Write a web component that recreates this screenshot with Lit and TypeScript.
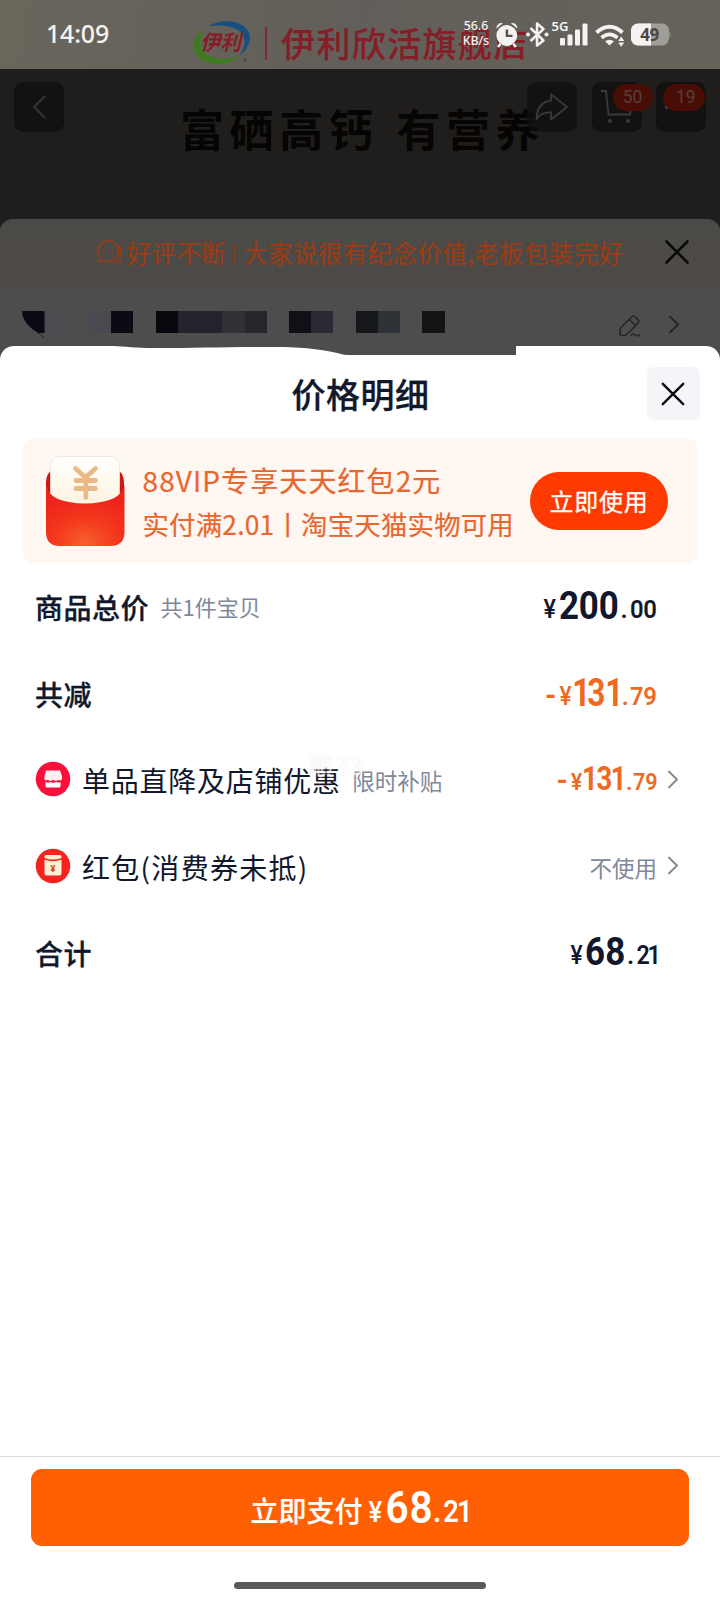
import { LitElement, html, css, svg } from "lit";
import { customElement, property } from "lit/decorators.js";

const chevron = svg`<path d="M2 1.6 L10 9.5 L2 17.4" fill="none" stroke="currentColor" stroke-width="2" stroke-linecap="round" stroke-linejoin="round"/>`;

@customElement("status-bar")
class StatusBar extends LitElement {
  static styles = css`
    :host { display: flex; height: 69px; box-sizing: border-box; padding: 0 49px 0 46px; align-items: center; justify-content: space-between; color: #f4f3f1; font-family: "Noto Sans", sans-serif; position: relative; }
    .time { font-size: 25px; font-weight: 500; line-height: 30px; letter-spacing: -0.2px; margin-top: -3px; }
    .icons { display: flex; align-items: center; height: 69px; }
    .speed { font-size: 12.3px; line-height: 15px; text-align: center; font-weight: 500; width: 28px; margin-right: 6px; margin-top: -4px; white-space: nowrap; }
    svg { display: block; flex: none; overflow: visible; }
    .num { font: 700 17px "Noto Sans", sans-serif; letter-spacing: -0.5px; }
    .g { font: 600 12px "Noto Sans", sans-serif; }
  `;
  render() {
    return html`
      <div class="time">14:09</div>
      <div class="icons">
        <div class="speed">56.6<br />KB/s</div>
        <svg width="175" height="30" viewBox="496 18.500 175 30">
          <g fill="#f4f3f1" stroke="none">
            <circle cx="506.800" cy="34" r="10.400"/>
            <path d="M496.400 27 a5 5 0 0 1 6.500-5.200z M517.400 27 a5 5 0 0 0-6.500-5.200z"/>
            <path d="M499.500 41.500 l2 1.500-2.500 3.200-2-1.500z M514.300 41.500l-2 1.500 2.500 3.200 2-1.500z"/>
          </g>
          <path d="M506.900 28 V34.400 H512.500" fill="none" stroke="#5b5148" stroke-width="2.400"/>
          <path d="M530.500 26.500 L543.500 39 L537 44 V22 L543.500 27.500 L530.500 39.500" fill="none" stroke="#f4f3f1" stroke-width="2.500" stroke-linejoin="round"/>
          <circle cx="528" cy="33" r="2" fill="#f4f3f1"/><circle cx="546.500" cy="33" r="2" fill="#f4f3f1"/>
          <text class="g" x="551.500" y="29.300" fill="#f4f3f1" textLength="17" lengthAdjust="spacingAndGlyphs">5G</text>
          <g fill="#f4f3f1">
            <rect x="560" y="36.500" width="5" height="7.500" rx="1.200"/>
            <rect x="567.500" y="33" width="5" height="11" rx="1.200"/>
            <rect x="575" y="28" width="5" height="16" rx="1.200"/>
            <rect x="582.500" y="22" width="5" height="22" rx="1.200"/>
          </g>
          <g fill="none" stroke="#f4f3f1" stroke-width="3.800">
            <path d="M596.500 31 Q609.500 19.500 622.500 31"/>
            <path d="M601.500 36.300 Q609.500 29.500 617.500 36.300"/>
          </g>
          <path d="M605 39.800 Q609.500 36.500 614 39.800 L609.500 44z" fill="#f4f3f1"/>
          <path d="M618.200 39.500 l3-4.500 3 4.500z M618.200 41 h6 l-3 4.200z" fill="#f4f3f1"/>
          <path d="M638 22 H662 a7 7 0 0 1 7 7 V37 a7 7 0 0 1-7 7 H638 a7 7 0 0 1-7-7 V29 a7 7 0 0 1 7-7z" fill="#a19e98"/>
          <path d="M638 22 H651 V44 H638 a7 7 0 0 1-7-7 V29 a7 7 0 0 1 7-7z" fill="#f4f3f1"/>
          <path d="M669.500 29.500 q2 3.500 0 7z" fill="#a19e98"/>
          <text class="num" x="649.500" y="39.200" text-anchor="middle" fill="#4c4842">49</text>
        </svg>
      </div>`;
  }
}

/** One run of a price: text, glyph origins, font size, horizontal condensing, weight. */
type Run = [string, number[], number, number, number];
interface PriceArt { width: number; base: number; runs: Run[] }

const PRICES: Record<string, PriceArt> = {
  total: { width: 120, base: 31.500, runs: [["¥", [7.5], 26, 0.9, 500], ["200", [23, 42.8, 62.8], 38, 0.92, 700], [".", [84.5], 26.5, 0.95, 600], ["00", [94, 107.3], 26.5, 0.9, 600]] },
  off: { width: 120, base: 31.500, runs: [["-", [9], 30, 0.95, 700], ["¥", [23.5], 26, 0.88, 500], ["131", [36.2, 51.3, 69.2], 38, 0.83, 700], [".", [85.8], 26.5, 0.95, 600], ["79", [94, 107.2], 26.5, 0.9, 600]] },
  item: { width: 120, base: 30, runs: [["-", [19.500], 30, 0.95, 700], ["¥", [34], 24, 0.88, 600], ["131", [45, 59.4, 73.8], 33.5, 0.82, 700], [".", [89], 24.5, 0.95, 600], ["79", [96, 108.2], 24.5, 0.88, 600]] },
  sum: { width: 120, base: 31.500, runs: [["¥", [34.5], 26, 0.88, 500], ["68", [49, 69.2], 38, 0.92, 700], [".", [91], 26.5, 0.95, 600], ["21", [100.4, 111.5], 26.5, 0.88, 600]] },
  pay: { width: 101, base: 34.5, runs: [["¥", [-0.5], 30, 0.86, 500], ["68", [16.5, 40.5], 45, 0.9, 600], [".", [64], 31, 0.95, 600], ["21", [74.3, 88], 31, 0.88, 600]] },
};

@customElement("price-tag")
class PriceTag extends LitElement {
  @property() kind = "total";
  static styles = css`
    :host { display: block; font-family: Roboto, "Liberation Sans", sans-serif; }
    svg { display: block; overflow: visible; }
  `;
  render() {
    const p = PRICES[this.kind];
    return html`<svg width=${p.width} height="40" viewBox="0 0 ${p.width} 40" fill="currentColor">
      ${p.runs.map(([t, xs, size, k, w]) => svg`<text transform="scale(${k} 1)" x=${xs.map((x) => (x / k).toFixed(2)).join(" ")} y=${p.base} font-size=${size} font-weight=${w}>${t}</text>`)}
    </svg>`;
  }
}

@customElement("app-root")
class AppRoot extends LitElement {
  static styles = css`
    :host { display: block; width: 720px; height: 1600px; overflow: hidden; font-family: "Noto Sans CJK SC", sans-serif; color: #11182b; background: #1f1e1c; }
    * { box-sizing: border-box; }
    svg { display: block; flex: none; }
    .page { display: flex; flex-direction: column; height: 1600px; }
    .hero { height: 219px; position: relative; flex: none; background: #1f1e1c; }
    .top { background: linear-gradient(100deg, #6a665c, #625f5a 50%, #66635a); height: 69px; }
    .brand { position: absolute; left: 193px; top: 20px; display: flex; align-items: center; height: 46px; }
    .brand .bar { width: 2px; height: 33px; background: #7c2a2e; margin: 0 14px 0 14px; }
    .store { font-size: 34px; font-weight: 500; letter-spacing: 1.4px; color: #871d27; line-height: 46px; white-space: nowrap; margin-top: -1px; -webkit-text-stroke: .2px #871d27; }
    .slogan { position: absolute; left: 180px; top: 96px; font-size: 44px; line-height: 64px; font-weight: 700; letter-spacing: 5.6px; color: #060504; white-space: nowrap; display: flex; gap: 18px; }
    .nav { display: flex; padding: 13px 14px 0 14px; gap: 14.5px; position: relative; }
    .nav .tile { width: 50px; height: 50px; border-radius: 9px; background: rgba(15, 15, 16, .8); display: grid; place-items: center; position: relative; }
    .nav .tile.back { margin-right: auto; }
    .badge { position: absolute; top: 2px; right: -11px; width: 40px; height: 27px; border-radius: 14px; background: #480d05; color: #54403b; font: 400 17.5px/27px Roboto, sans-serif; text-align: center; }
    .badge.end { right: 1px; width: 42px; padding-left: 13px; text-align: left; }
    .cart { height: 141px; flex: none; background: #4d4d4d; border-radius: 13px 13px 0 0; margin-bottom: -14px; }
    .notice { height: 70px; border-radius: 13px 13px 0 0; background: linear-gradient(#4c4a48, #4d4a46); padding: 0 30px 4px 97px; display: flex; align-items: center; color: #9c3c14; }
    .notice .txt { font-size: 24.5px; letter-spacing: .37px; white-space: nowrap; margin-left: 5px; margin-top: 2px; display: flex; align-items: center; line-height: 36px; -webkit-text-stroke: .2px #9c3c14; }
    .notice .sep { width: 1px; height: 20px; background: #84401f; margin: 2px 8px 0 8px; }
    .notice .x { margin-left: auto; margin-top: 0; }
    .addr { display: flex; align-items: flex-start; justify-content: space-between; padding: 22px 40px 0 22px; color: #25272b; }
    .addr .r { display: flex; gap: 27px; padding-top: 4px; }
    .sheet { flex: 1; background: #fff; display: flex; flex-direction: column; border-radius: 14px 14px 0 0; position: relative; }
    .notch { position: absolute; left: 114px; top: 0; }
    .head { height: 93px; display: flex; align-items: center; justify-content: center; position: relative; }
    .title { font-size: 34px; letter-spacing: .5px; font-weight: 500; line-height: 48px; margin: 2px 0 0 1px; -webkit-text-stroke: .3px #11182b; }
    .close { position: absolute; right: 20px; top: 21px; width: 53px; height: 53px; border-radius: 7px; background: #f3f5f9; display: grid; place-items: center; padding-right: 1px; }
    .coupon { margin: 0 22px 0 23px; height: 124px; background: #fef7f2; border-radius: 11px; display: flex; align-items: center; padding: 0 30px 0 22px; }
    .coupon .t { margin-left: 17.500px; flex: 1; color: #e9672f; white-space: nowrap; -webkit-text-stroke: .2px #e9672f; }
    .t1 { font-size: 28px; line-height: 44px; letter-spacing: 1.1px; margin-top: 1px; }
    .t2 { font-size: 26.400px; line-height: 44px; letter-spacing: .22px; }
    .use { width: 138px; height: 58px; border-radius: 29px; background: #ff3a00; color: #fff; font-size: 24px; letter-spacing: .8px; line-height: 57px; text-align: center; flex: none; -webkit-text-stroke: .3px #fff; }
    .rows { padding: 1px 41px 0 35px; flex: 1; }
    .row { height: 86.5px; display: flex; align-items: center; }
    .k { font-size: 28px; letter-spacing: .5px; font-weight: 500; line-height: 40px; white-space: nowrap; -webkit-text-stroke: .3px #11182b; }
    .k.r { font-weight: 400; letter-spacing: .75px; margin-left: 11px; -webkit-text-stroke: 0; }
    .k.w { letter-spacing: 1.3px; }
    .s { font-size: 22.500px; color: #7e889b; margin-left: 11.500px; line-height: 32px; white-space: nowrap; }
    .s.n { font-size: 22px; padding-bottom: 2px; }
    .row.link > svg:first-child { margin-top: -2px; }
    .v { margin-left: auto; padding-right: 23px; }
    .row.link .v { padding-right: 10px; }
    .v.s { margin-left: auto; }
    .or { color: #ee6a23; }
    .chev { color: #83868c; margin-top: -2px; }
    .foot { height: 144px; border-top: 1px solid #dcdcdc; padding: 12px 31px 0 31px; display: flex; flex-direction: column; align-items: center; }
    .pay { align-self: stretch; height: 77px; border-radius: 11px; background: #ff6003; color: #fff; display: flex; align-items: center; justify-content: center; gap: 6px; }
    .pay .lab { font-size: 28px; font-weight: 500; line-height: 40px; padding-top: 4px; -webkit-text-stroke: .2px #fff; }
    .home { width: 252px; height: 7px; border-radius: 4px; background: #5a5a5a; margin-top: 36px; }
    .wm { position: absolute; left: 309px; top: 404px; font-size: 24px; line-height: 30px; color: #fff; text-shadow: 0 0 2px #dcdcdc; letter-spacing: 2px; opacity: .7; }
    .it { font: italic 700 21px "Noto Sans CJK SC", sans-serif; }
    .yn { font: 700 9px Roboto, sans-serif; }
  `;

  private mosaic() {
    const b: [number, number, string][] = [
      [45, 22, "#4b4c4f"], [89, 22, "#4a4b50"], [111, 22, "#0b0b14"],
      [156, 22, "#08080f"], [178, 44, "#23232d"], [222, 23, "#303035"], [245, 22, "#25252c"],
      [289, 22, "#101016"], [311, 22, "#292a33"], [356, 22, "#15171b"], [378, 22, "#2e3237"], [422, 23, "#131416"],
    ];
    return svg`${b.map(([x, w, c]) => svg`<rect x=${x} y="0" width=${w} height="22" fill=${c}/>`)}
      <path d="M22 0 H44.500 V22 H38 Q22 12 22 0z" fill="#0a0a14"/>
      <path d="M37 21 L44.500 27" stroke="#222" stroke-width="1"/>`;
  }

  render() {
    return html`<div class="page">
      <div class="hero">
        <div class="top">
          <div class="brand">
            <svg width="58" height="46" viewBox="0 0 58 46">
              <path d="M15 6 C38 -6 62 6 56 23 C54 29 50 33 46 36 C58 20 52 2 15 6z" fill="#15507f"/>
              <path d="M11 9 C-9 22 0 46 29 44 C36 43.500 43 40 46 36 C28 43 -3 38 11 9z" fill="#3f7a22"/>
              <text class="it" x="7" y="30" fill="#871d27" textLength="41" lengthAdjust="spacingAndGlyphs">伊利</text>
              <circle cx="52" cy="40" r="2" fill="#4d4a49"/>
            </svg>
            <div class="bar"></div>
            <div class="store">伊利欣活旗舰店</div>
          </div>
          <status-bar></status-bar>
        </div>
        <div class="slogan"><span>富硒高钙</span><span>有营养</span></div>
        <div class="nav">
          <div class="tile back"><svg width="14" height="24" viewBox="0 0 14 24"><path d="M13 1 L2 12 L13 23" fill="none" stroke="#35343a" stroke-width="1.800"/></svg></div>
          <div class="tile"><svg width="34" height="28" viewBox="0 0 34 28"><path d="M16 7.500 V1.500 L32 14 L16 26.500 V19.500 C9 19 5 21 1.500 26 C2 15 7 8.500 16 7.500z" fill="none" stroke="#3b3a3a" stroke-width="1.800" stroke-linejoin="round"/></svg></div>
          <div class="tile"><svg width="34" height="34" viewBox="0 0 34 34"><path d="M1 1 H6 L8.500 24.500 H30 L32 12" fill="none" stroke="#3b3a3a" stroke-width="1.800"/><circle cx="10" cy="31" r="2" fill="#3b3a3a"/><circle cx="28" cy="31" r="2" fill="#3b3a3a"/></svg><div class="badge">50</div></div>
          <div class="tile"><svg width="34" height="6" viewBox="0 0 34 6"><circle cx="3" cy="3" r="2.200" fill="#3b3a3a"/><path d="M15 5.500 h6" stroke="#33302f"/></svg><div class="badge end">19</div></div>
        </div>
      </div>
      <div class="cart">
        <div class="notice">
          <svg width="25" height="24" viewBox="0 0 25 24" fill="none" stroke="#9c3c14" stroke-width="1.500">
            <path d="M2 21.300 L3 17 A10.200 10.200 0 1 1 11 21.300z" stroke-linejoin="round"/>
            <path d="M20 4.500 C25 8.500 25 15 22.500 18 L23 22 H16"/>
            <g fill="#9c3c14" stroke="none"><circle cx="6.500" cy="11" r="1.100"/><circle cx="11" cy="11" r="1.100"/><circle cx="15.500" cy="11" r="1.100"/></g>
          </svg>
          <div class="txt">好评不断<span class="sep"></span>大家说很有纪念价值,老板包装完好</div>
          <svg class="x" width="26" height="26" viewBox="0 0 26 26"><path d="M2.500 2.500 L23.500 23.500 M23.500 2.500 L2.500 23.500" stroke="#0a0a0a" stroke-width="2.600" stroke-linecap="round"/></svg>
        </div>
        <div class="addr">
          <svg width="430" height="28" viewBox="22 0 430 28">${this.mosaic()}</svg>
          <div class="r">
            <svg width="22" height="22" viewBox="0 0 22 22" fill="none" stroke="#242629" stroke-width="1.600" stroke-linejoin="round" stroke-linecap="round"><path d="M1 13.500 L12.500 2 Q14.500 .5 16.500 2.200 L19 4.700 Q20.500 6.500 19 8.200 L7.500 19.500 Q6.500 20.500 4.500 20.500 H2.500 Q1 20.500 1 18.500z M10.500 4.500 L16.500 10.500 M12.500 20 q2-2 4 0 t4-.5"/></svg>
            <svg width="12" height="20" viewBox="0 0 12 20" color="#222427">${chevron}</svg>
          </div>
        </div>
      </div>
      <div class="sheet">
        <svg class="notch" width="402" height="9" viewBox="0 0 402 9"><path d="M0 0 H402 V9 H235 L230 8.800 C212 4 192 1.300 168 1 C110 .5 80 2.200 40 2 C22 1.800 10 .6 0 0z" fill="#4d4d4d"/></svg>
        <div class="head">
          <div class="title">价格明细</div>
          <div class="close"><svg width="24" height="24" viewBox="0 0 24 24"><path d="M1.800 1.800 L22.200 22.200 M22.200 1.800 L1.800 22.200" stroke="#0b0b0b" stroke-width="2.400" stroke-linecap="round"/></svg></div>
        </div>
        <div class="coupon">
          <svg width="80" height="92" viewBox="0 0 80 92">
            <defs>
              <radialGradient id="pk" cx=".5" cy=".95" r=".8"><stop offset="0" stop-color="#f9602c"/><stop offset=".5" stop-color="#f3381c"/><stop offset="1" stop-color="#ee231c"/></radialGradient>
              <linearGradient id="cd" x1="0" y1="0" x2="0" y2="1"><stop offset="0" stop-color="#fff"/><stop offset="1" stop-color="#fdf1d8"/></linearGradient>
            </defs>
            <path d="M1 28 Q1 15 12 14 H68 Q79 15 79 28 V60 H1z" fill="#cf1712"/>
            <rect x="5.500" y="1.500" width="69" height="60" rx="9" fill="url(#cd)" stroke="#efe2d2" stroke-width=".8"/>
            <path d="M1 30 Q4 44 24 47 Q40 50 56 47 Q76 44 79.500 30 V77 Q79.500 91 65 91 H15 Q1 91 1 77z" fill="url(#pk)"/>
            <path d="M30.500 13.500 L40.500 22.500 L50.500 13.500 M31 25.500 H50.500 M31 33.500 H50.500 M40.800 23 V42.500" fill="none" stroke="#eab988" stroke-width="4.800" stroke-linecap="round"/>
          </svg>
          <div class="t"><div class="t1">88VIP专享天天红包2元</div><div class="t2">实付满2.01丨淘宝天猫实物可用</div></div>
          <div class="use">立即使用</div>
        </div>
        <div class="rows">
          <div class="row"><span class="k">商品总价</span><span class="s n">共1件宝贝</span><price-tag class="v" kind="total"></price-tag></div>
          <div class="row"><span class="k">共减</span><price-tag class="v or" kind="off"></price-tag></div>
          <div class="row link">
            <svg width="36" height="36" viewBox="0 0 36 36"><circle cx="18" cy="18" r="17.300" fill="#f80f3c"/><path d="M11 9.500 H25 L27 15 V18 Q25.500 20.500 23.500 18.800 Q21 21 18 18.800 Q15.500 21 12.800 18.800 Q10 20.500 9.500 18 V15z" fill="#fff1ee"/><path d="M10.500 21 Q13 22 14.500 21 Q18 22.500 21.500 21 Q24 22 25.500 21 V25 Q25.500 26.500 24 26.500 H12 Q10.500 26.500 10.500 25z" fill="#fff"/></svg>
            <span class="k r">单品直降及店铺优惠</span><span class="s">限时补贴</span>
            <price-tag class="v or" kind="item"></price-tag>
            <svg class="chev" width="12" height="19" viewBox="0 0 12 19">${chevron}</svg>
          </div>
          <div class="row link">
            <svg width="36" height="36" viewBox="0 0 36 36"><circle cx="18" cy="18" r="17.300" fill="#f5221f"/><path d="M9.500 8.500 Q9.500 7 11 7 H25 Q26.500 7 26.500 8.500 V10 Q18 13 9.500 10z M9.500 11.800 Q18 14.500 26.500 11.800 V25.500 Q26.500 27.500 24.500 27.500 H11.500 Q9.500 27.500 9.500 25.500z" fill="#fff0d2"/><text class="yn" x="18" y="23.500" text-anchor="middle" fill="#dc3a20">¥</text></svg>
            <span class="k r w">红包(消费券未抵)</span>
            <span class="v s">不使用</span>
            <svg class="chev" width="12" height="19" viewBox="0 0 12 19">${chevron}</svg>
          </div>
          <div class="row"><span class="k">合计</span><price-tag class="v" kind="sum"></price-tag></div>
        </div>
        <div class="foot">
          <div class="pay"><span class="lab">立即支付</span><price-tag kind="pay"></price-tag></div>
          <div class="home"></div>
        </div>
        <div class="wm">順33</div>
      </div>
    </div>`;
  }
}
